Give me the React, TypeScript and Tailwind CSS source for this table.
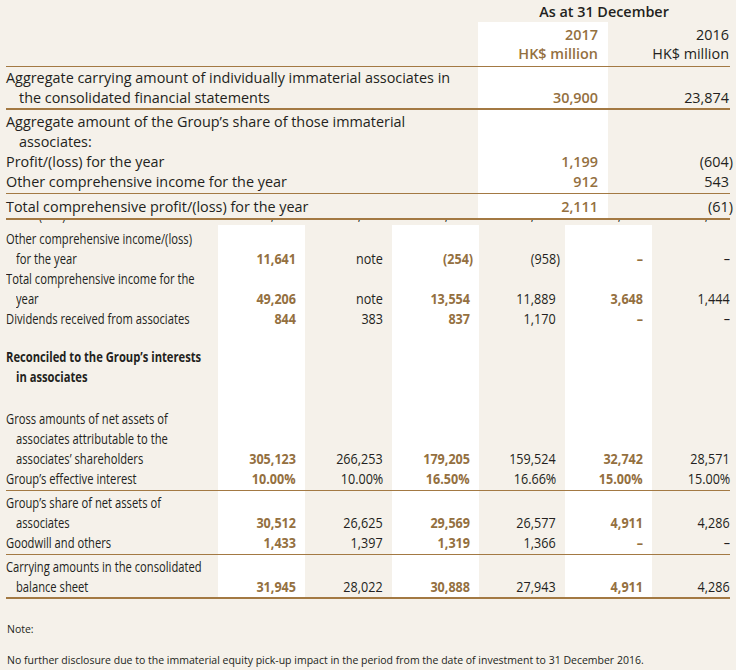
import React from "react";

type Cell = string | null;

const BROWN = "text-[#94703f]";

function Val({ v, hi, bold }: { v: Cell; hi?: boolean; bold?: boolean }) {
  if (!v) return null;
  const hang = v.endsWith(")") ? "-mr-[4px]" : "";
  return <span className={`${hang} ${hi ? `${BROWN} ${bold ? "font-bold" : "font-semibold"}` : ""}`}>{v}</span>;
}

// condensed look: the face is narrowed with scale-x, because no condensed family is installed
function Narrow({ children, right, bold }: { children: React.ReactNode; right?: boolean; bold?: boolean }) {
  return (
    <span
      className={`inline-block whitespace-nowrap ${right ? "origin-right scale-x-[0.9]" : "origin-left scale-x-[0.8]"} ${bold ? "font-bold" : ""}`}
    >
      {children}
    </span>
  );
}

function TopRow({ lines, a, b, pad, border }: { lines: string[]; a?: Cell; b?: Cell; pad: string; border: string }) {
  return (
    <div className={`grid grid-cols-[472px_130px_122px] ${border}`}>
      <div className={pad}>
        {lines.map((l, i) => (
          <div key={i} className={i > 0 ? "pl-[13px]" : ""}>{l}</div>
        ))}
      </div>
      <div className={`${pad} bg-white flex flex-col justify-end items-end pr-[10px]`}>
        <Val v={a ?? null} hi />
      </div>
      <div className={`${pad} flex flex-col justify-end items-end pr-px`}>
        <Val v={b ?? null} />
      </div>
    </div>
  );
}

function BRow({ lines, vals, pad, border = "", bold }: { lines: string[]; vals?: Cell[]; pad: string; border?: string; bold?: boolean }) {
  const v = vals ?? [null, null, null, null, null, null];
  return (
    <div className={`grid grid-cols-[212px_87px_87px_87px_86px_87px_78px] ${border}`}>
      <div className={pad}>
        {lines.map((l, i) => (
          <div key={i} className={i > 0 ? "pl-[10px]" : ""}>
            <Narrow bold={bold}>{l}</Narrow>
          </div>
        ))}
      </div>
      {v.map((x, i) => (
        <div
          key={i}
          className={`${pad} flex flex-col justify-end items-end ${i % 2 === 0 ? "bg-white" : ""} ${i === 5 ? "pr-0" : "pr-[9px]"}`}
        >
          {x && (
            <Narrow right>
              <Val v={x} hi={i % 2 === 0} bold />
            </Narrow>
          )}
        </div>
      ))}
    </div>
  );
}

export default function App() {
  return (
    <div className="w-[736px] h-[670px] overflow-hidden bg-[#f5f1ea] text-[#231f20] font-['Open_Sans',sans-serif]">
      <div className="px-[6px]">
        {/* top table */}
        <div className="text-[14.4px] leading-[20px]">
          <div className="grid grid-cols-[472px_252px] h-[22px]">
            <div />
            <div className="text-center font-semibold leading-[22px] pt-px">As at 31 December</div>
          </div>
          <div className="grid grid-cols-[472px_130px_122px] border-b border-[#a37943] leading-[19px]">
            <div />
            <div className={`bg-white pt-[3px] pb-[3px] pr-[10px] text-right ${BROWN} font-semibold`}>
              <div>2017</div>
              <div>HK$ million</div>
            </div>
            <div className="pt-[3px] pb-[3px] pr-px text-right">
              <div>2016</div>
              <div>HK$ million</div>
            </div>
          </div>
          <TopRow
            lines={["Aggregate carrying amount of individually immaterial associates in", "the consolidated financial statements"]}
            a="30,900"
            b="23,874"
            pad="pt-px pb-0"
            border="border-b-2 border-[#a37943]"
          />
          <TopRow lines={["Aggregate amount of the Group’s share of those immaterial", "associates:"]} pad="pt-[2px]" border="" />
          <TopRow lines={["Profit/(loss) for the year"]} a="1,199" b="(604)" pad="" border="" />
          <TopRow
            lines={["Other comprehensive income for the year"]}
            a="912"
            b="543"
            pad="pb-px"
            border="border-b border-[#a37943]"
          />
          <TopRow
            lines={["Total comprehensive profit/(loss) for the year"]}
            a="2,111"
            b="(61)"
            pad="pt-[3px] pb-px"
            border="border-b-2 border-[#a37943]"
          />
        </div>

        {/* bottom table */}
        <div className="text-[14px] leading-[20px]">
          {/* only the tails of the row above peek out here */}
          <div className="grid grid-cols-[212px_87px_87px_87px_86px_87px_78px] h-[5px] overflow-hidden text-transparent">
            <div className="-mt-[15px]">
              <Narrow>
                Profit/<span className="text-[#231f20]">(</span>loss<span className="text-[#231f20]">)</span> for the year
              </Narrow>
            </div>
            {["38,565", "32,412", "37,808", "35,847", "26,311", "23,874"].map((x, i) => (
              <div key={i} className={`-mt-[15px] text-right ${i === 5 ? "" : "pr-[9px]"}`}>
                <Narrow right>
                  {x.slice(0, 2)}
                  <span className="text-[#231f20]">,</span>
                  {x.slice(3)}
                </Narrow>
              </div>
            ))}
          </div>
          <BRow
            lines={["Other comprehensive income/(loss)", "for the year"]}
            vals={["11,641", "note", "(254)", "(958)", "–", "–"]}
            pad="pt-[4px]"
          />
          <BRow
            lines={["Total comprehensive income for the", "year"]}
            vals={["49,206", "note", "13,554", "11,889", "3,648", "1,444"]}
            pad=""
          />
          <BRow lines={["Dividends received from associates"]} vals={["844", "383", "837", "1,170", "–", "–"]} pad="" />
          <BRow lines={[]} pad="h-[18px]" />
          <BRow lines={["Reconciled to the Group’s interests", "in associates"]} pad="" bold />
          <BRow lines={[]} pad="h-[22px]" />
          <BRow
            lines={["Gross amounts of net assets of", "associates attributable to the", "associates’ shareholders"]}
            vals={["305,123", "266,253", "179,205", "159,524", "32,742", "28,571"]}
            pad=""
          />
          <BRow
            lines={["Group’s effective interest"]}
            vals={["10.00%", "10.00%", "16.50%", "16.66%", "15.00%", "15.00%"]}
            pad="pb-px"
            border="border-b border-[#a37943]"
          />
          <BRow
            lines={["Group’s share of net assets of", "associates"]}
            vals={["30,512", "26,625", "29,569", "26,577", "4,911", "4,286"]}
            pad="pt-[2px]"
          />
          <BRow
            lines={["Goodwill and others"]}
            vals={["1,433", "1,397", "1,319", "1,366", "–", "–"]}
            pad="pb-px"
            border="border-b border-[#a37943]"
          />
          <BRow
            lines={["Carrying amounts in the consolidated", "balance sheet"]}
            vals={["31,945", "28,022", "30,888", "27,943", "4,911", "4,286"]}
            pad="pt-[2px]"
            border="border-b-2 border-[#a37943]"
          />
        </div>

        <div className="text-[10.5px] leading-[14px] pl-px">
          <div className="mt-[23px]">Note:</div>
          <div className="mt-[17px]">
            No further disclosure due to the immaterial equity pick-up impact in the period from the date of investment to 31 December 2016.
          </div>
        </div>
      </div>
    </div>
  );
}
